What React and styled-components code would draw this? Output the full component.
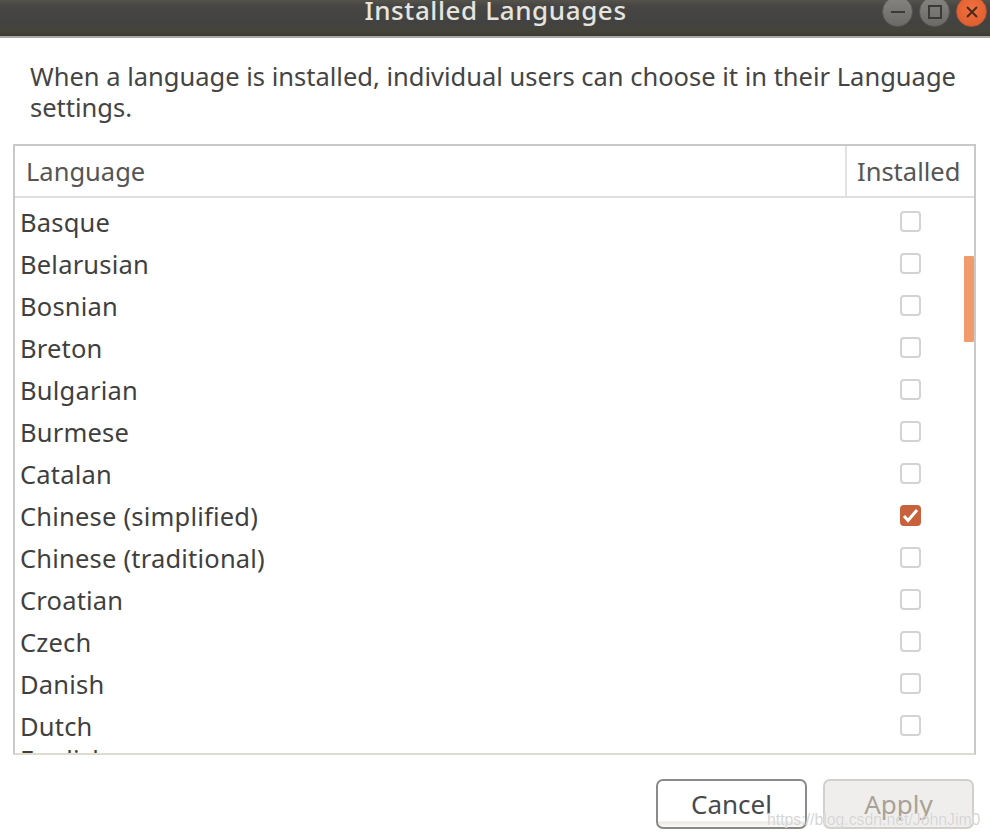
import React from 'react';
import styled, { createGlobalStyle } from 'styled-components';

const GlobalStyle = createGlobalStyle`
  html, body {
    margin: 0;
    padding: 0;
    background: #fff;
  }
  body {
    font-family: "Noto Sans", "Open Sans", "DejaVu Sans", sans-serif;
    color: #3d3d3d;
  }
`;

const Window = styled.div`
  width: 990px;
  height: 838px;
  display: flex;
  flex-direction: column;
  overflow: hidden;
  position: relative;
  background: #fff;
`;

const TitleBar = styled.div`
  height: 38px;
  flex: none;
  box-sizing: border-box;
  position: relative;
  display: flex;
  justify-content: center;
  align-items: center;
  overflow: hidden;
  background: linear-gradient(#55524a 0, #474644 6px, #424242 22px, #45443a 31px, #3c3a33 36px);
  border-bottom: 2px solid #a9a9a6;
`;

const Title = styled.div`
  color: #e6e4df;
  font-size: 26px;
  font-weight: 500;
  letter-spacing: 0.6px;
  margin-top: -16px;
  margin-right: -1px;
`;

const Controls = styled.div`
  position: absolute;
  top: -4px;
  right: 3px;
  display: flex;
  gap: 6px;
`;

const Control = styled.div`
  width: 31px;
  height: 31px;
  border-radius: 50%;
  display: flex;
  align-items: center;
  justify-content: center;
  background: ${(p) => (p.$close ? 'radial-gradient(circle at 50% 40%, #f0703f, #dc5a2c)' : 'linear-gradient(#858480, #6b6a66)')};
  border: 1px solid ${(p) => (p.$close ? '#b9542f' : '#5a5955')};
  box-sizing: border-box;
`;

const Intro = styled.p`
  margin: 0;
  padding: 23px 20px 0 30px;
  font-size: 25.5px;
  line-height: 31px;
  color: #444;
  white-space: pre-line;
`;

const Table = styled.div`
  margin: 21px 14px 0 13px;
  height: 611px;
  flex: none;
  box-sizing: border-box;
  border: 2px solid #c9c9c7;
  border-bottom-color: #dcdcd0;
  position: relative;
  display: flex;
  flex-direction: column;
  overflow: hidden;
`;

const HeaderRow = styled.div`
  height: 50px;
  flex: none;
  display: grid;
  grid-template-columns: 830px 1fr;
  border-bottom: 2px solid #dedede;
  font-size: 25.5px;
  color: #555;
`;

const HeaderCell = styled.div`
  display: flex;
  align-items: center;
  padding-left: ${(p) => p.$pad}px;
  border-left: ${(p) => (p.$divider ? '2px solid #e2e2e2' : 'none')};
  white-space: nowrap;
`;

const Rows = styled.div`
  flex: 1;
  min-height: 0;
  overflow: hidden;
  padding-top: 3px;
`;

const Check = styled.div`
  width: 21px;
  height: 21px;
  box-sizing: border-box;
  border-radius: 4px;
  margin-top: -1px;
  display: flex;
  align-items: center;
  justify-content: center;
  border: 2px solid ${(p) => (p.$on ? '#c8623c' : '#d3d3d1')};
  background: ${(p) => (p.$on ? '#c8623c' : '#fff')};
`;

const Row = styled.div`
  height: 42px;
  display: grid;
  grid-template-columns: 1fr 20px;
  align-items: center;
  padding: 0 54px 0 5px;
  font-size: 25.5px;
  letter-spacing: 0.2px;
  color: #3f3f3f;
  margin-top: ${(p) => (p.$peek ? '-9px' : '0')};

  ${Check} {
    transform: translateY(${(p) => (p.$peek ? '6px' : '0')});
  }
`;

const Thumb = styled.div`
  position: absolute;
  top: 110px;
  right: 0;
  width: 10px;
  height: 86px;
  background: #f19b6c;
  border-radius: 1px;
`;

const Footer = styled.div`
  display: flex;
  justify-content: flex-end;
  gap: 16px;
  padding: 24px 16px 0 0;
`;

const Button = styled.div`
  width: 151px;
  height: 50px;
  box-sizing: border-box;
  border-radius: 7px;
  display: flex;
  align-items: center;
  justify-content: center;
  font-size: 26px;
  color: ${(p) => (p.$disabled ? '#a9a297' : '#47494d')};
  background: ${(p) => (p.$disabled ? '#efeeec' : 'linear-gradient(#fff 85%, #efe9e4 90%, #fafafa)')};
  border: 2px solid ${(p) => (p.$disabled ? '#d2d0cd' : '#8a8a88')};
`;

const Watermark = styled.div`
  position: absolute;
  left: 767px;
  top: 811px;
  font-family: "Liberation Sans", Arial, sans-serif;
  font-size: 15.8px;
  color: rgba(205, 205, 205, 0.85);
  text-shadow: 0 0 1px #fff;
  white-space: nowrap;
`;

const languages = [
  ['Basque'],
  ['Belarusian'],
  ['Bosnian'],
  ['Breton'],
  ['Bulgarian'],
  ['Burmese'],
  ['Catalan'],
  ['Chinese (simplified)', true],
  ['Chinese (traditional)'],
  ['Croatian'],
  ['Czech'],
  ['Danish'],
  ['Dutch'],
];

export default function App() {
  return (
    <Window>
      <GlobalStyle />
      <TitleBar>
        <Title>Installed Languages</Title>
        <Controls>
          <Control>
            <svg width="16" height="16" viewBox="0 0 16 16">
              <path d="M1 8h14" stroke="#3b3a38" strokeWidth="2" />
            </svg>
          </Control>
          <Control>
            <svg width="16" height="16" viewBox="0 0 16 16">
              <rect x="2" y="2" width="12" height="12" fill="none" stroke="#3b3a38" strokeWidth="2" />
            </svg>
          </Control>
          <Control $close>
            <svg width="16" height="16" viewBox="0 0 16 16">
              <path d="M3 3l10 10M13 3L3 13" stroke="#4a2a1a" strokeWidth="2" />
            </svg>
          </Control>
        </Controls>
      </TitleBar>
      <Intro>{'When a language is installed, individual users can choose it in their Language\nsettings.'}</Intro>
      <Table>
        <HeaderRow>
          <HeaderCell $pad={11}>Language</HeaderCell>
          <HeaderCell $pad={10} $divider>Installed</HeaderCell>
        </HeaderRow>
        <Rows>
          {languages.map(([name, on]) => (
            <Row key={name}>
              <span>{name}</span>
              <Check $on={on}>
                {on && (
                  <svg width="17" height="17" viewBox="0 0 17 17">
                    <path d="M2 9l4 4.5L15 3" fill="none" stroke="#fff" strokeWidth="3" />
                  </svg>
                )}
              </Check>
            </Row>
          ))}
          <Row $peek>
            <span>English</span>
            <Check />
          </Row>
        </Rows>
        <Thumb />
      </Table>
      <Footer>
        <Button>Cancel</Button>
        <Button $disabled>Apply</Button>
      </Footer>
      <Watermark>https://blog.csdn.net/JohnJim0</Watermark>
    </Window>
  );
}
